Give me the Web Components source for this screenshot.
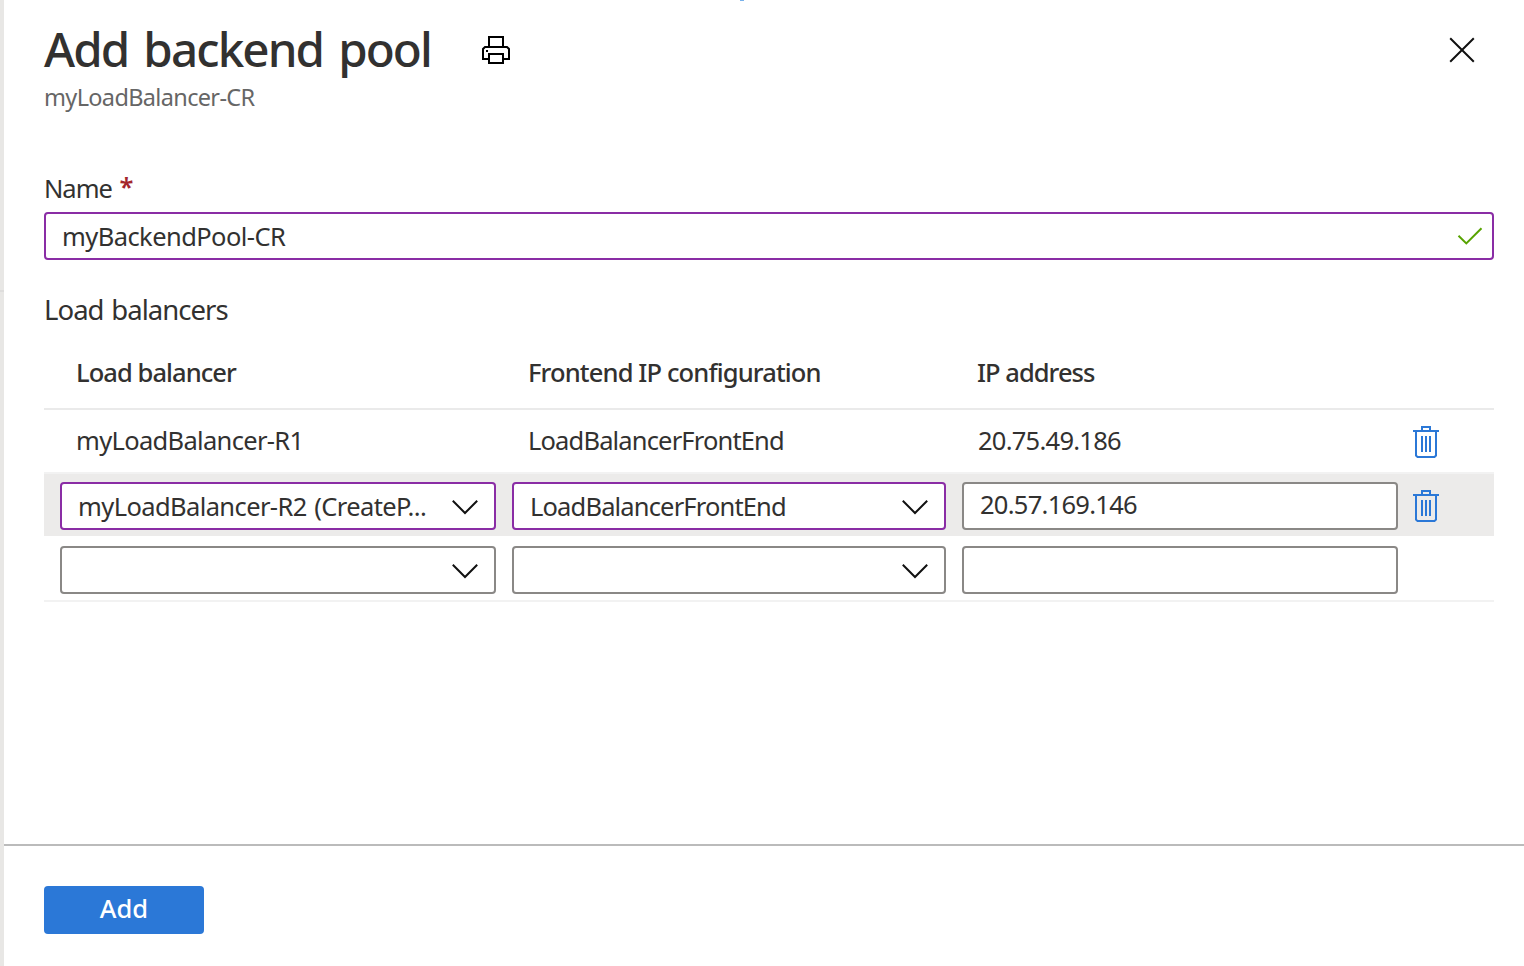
<!DOCTYPE html>
<html lang="en">
<head>
<meta charset="utf-8">
<title>Add backend pool</title>
<style>
html,body{margin:0;height:100%;background:#fff;overflow:hidden}
body{font-family:"Noto Sans","Open Sans",sans-serif;color:#323130}
</style>
</head>
<body>
<blade-page></blade-page>
<script>
const define = (name, html, setup) => {
  const template = document.createElement('template');
  template.innerHTML = html;
  customElements.define(name, class extends HTMLElement {
    connectedCallback() {
      if (this.shadowRoot) return;
      this.attachShadow({mode: 'open'}).append(template.content.cloneNode(true));
      if (setup) setup(this, this.shadowRoot);
    }
  });
};

/* A single line of text tracked so that its glyphs span the "span" attribute, in pixels;
   "gap" is extra width given to each space. */
define('tracked-text', `<style>
:host{display:block;white-space:nowrap;font-variant-ligatures:none;flex:none}
</style><slot></slot>`, host => {
  const text = host.textContent;
  const gap = +(host.getAttribute('gap') || 0);
  const cs = getComputedStyle(host);
  const ctx = document.createElement('canvas').getContext('2d');
  ctx.font = `${cs.fontWeight} ${cs.fontSize} ${cs.fontFamily}`;
  const m = ctx.measureText(text);
  const ink = m.actualBoundingBoxLeft + m.actualBoundingBoxRight + gap * (text.split(' ').length - 1);
  host.style.letterSpacing = ((+host.getAttribute('span') - ink) / (text.length - 1)).toFixed(3) + 'px';
  host.style.wordSpacing = gap + 'px';
  host.style.marginLeft = m.actualBoundingBoxLeft.toFixed(2) + 'px';
});

const icons = {
  print: [28, 28, '<path d="M7 11V1h14v10M7 23H1V13l2-2h22l2 2v10h-6M7 18h14v9H7z"/><rect x="4" y="14" width="2" height="2" fill="currentColor" stroke="none"/>'],
  close: [26, 26, '<path d="M1.2 1.2l23.6 23.6M24.8 1.2L1.2 24.8"/>'],
  check: [26, 18, '<path d="M1.5 8.8l7.8 7.6L24.5 1.2"/>'],
  chevron: [26, 14, '<path d="M.8.8L13 13 25.2.8"/>'],
  trash: [26, 32, '<path d="M0 5h26M9 5V1h8v4M3 5v24.5L4.5 31h17l1.5-1.5V5M9 10v16M13 10v16M17 10v16"/>']
};
customElements.define('line-icon', class extends HTMLElement {
  connectedCallback() {
    if (this.shadowRoot) return;
    const [w, h, body] = icons[this.getAttribute('name')];
    this.attachShadow({mode: 'open'}).innerHTML = `<style>:host{display:block;flex:none}svg{display:block;overflow:visible}</style>
<svg width="${w}" height="${h}" viewBox="0 0 ${w} ${h}" fill="none" stroke="currentColor" stroke-width="2">${body}</svg>`;
  }
});

define('form-field', `<style>
:host{display:flex;box-sizing:border-box;height:48px;border:2px solid #8a8886;border-radius:4px;background:#fff;
align-items:center;justify-content:space-between;padding:0 16px 0 18px;line-height:44px}
:host([edited]){border-color:#8a2da5}
:host([plain]){padding:0 16px 4px 17px}
::slotted(line-icon){color:#111;margin:2px 0 0 auto}
::slotted(line-icon[name=check]){color:#57a300;margin:-1px -7px 0 auto}
</style><slot></slot>`);

define('blade-header', `<style>
:host{display:grid;grid-template-columns:438px 1fr auto;padding:17px 49px 0 40px;height:150px;box-sizing:border-box}
.title{font-size:47.5px;line-height:64px;font-weight:500}
.sub{font-size:23.5px;line-height:32px;color:#666;padding-left:2px}
.print{color:#000;margin-top:19px}.close{color:#111;margin-top:20px}
</style>
<div><tracked-text class="title" span="385" gap="4.5">Add backend pool</tracked-text>
<tracked-text class="sub" span="209.5">myLoadBalancer-CR</tracked-text></div>
<line-icon class="print" name="print"></line-icon><line-icon class="close" name="close"></line-icon>`);

define('name-section', `<style>
:host{display:block;margin:21px 30px 0 40px;font-size:25.5px}
.label{display:flex;gap:7.5px;line-height:34px;padding-left:2px;height:41px}
.star{color:#a4262c;font-weight:600;line-height:31px}
</style>
<div class="label"><tracked-text span="66.5">Name</tracked-text><span class="star">*</span></div>
<form-field edited><tracked-text span="222">myBackendPool-CR</tracked-text><line-icon name="check"></line-icon></form-field>`);

define('balancer-row', `<style>
:host{display:grid;grid-template-columns:436px 434px 436px 26px;column-gap:16px;box-sizing:border-box;
height:64px;padding:0 16px;border-bottom:2px solid #f2f2f2;align-items:center;line-height:34px}
:host([head]){height:74px;border-color:#eaeaea;font-weight:500}
:host([active]){background:#ecebea;height:62px;border:0;padding-top:2px}
:host([last]){height:66px;padding-top:4px}
</style><slot></slot>`);

define('balancer-table', `<style>
:host{display:block;margin:0 30px 0 40px;font-size:25.5px}
h2{margin:0 0 0 2px;padding:0;font-size:27.5px;font-weight:400;line-height:38px;height:45px}
balancer-row>tracked-text{padding-left:18px}
.values{padding-bottom:2px}
balancer-row>.ip{padding-left:17px}
balancer-row>.ip-head{padding-left:15px}
line-icon[name=trash]{color:#2b78d7;margin-left:-1px}
.r1{margin-top:2px}
</style>
<h2><tracked-text span="181.5" gap="1.5">Load balancers</tracked-text></h2>
<balancer-row head><tracked-text span="159">Load balancer</tracked-text><tracked-text span="289.5">Frontend IP configuration</tracked-text><tracked-text class="ip-head" span="118">IP address</tracked-text></balancer-row>
<balancer-row><tracked-text class="values" span="221.5">myLoadBalancer-R1</tracked-text><tracked-text class="values" span="253">LoadBalancerFrontEnd</tracked-text><tracked-text class="values ip" span="142">20.75.49.186</tracked-text><line-icon class="r1" name="trash"></line-icon></balancer-row>
<balancer-row active><form-field edited><tracked-text span="345" gap="1.5">myLoadBalancer-R2 (CreateP...</tracked-text><line-icon name="chevron"></line-icon></form-field><form-field edited><tracked-text span="253">LoadBalancerFrontEnd</tracked-text><line-icon name="chevron"></line-icon></form-field><form-field plain><tracked-text span="156">20.57.169.146</tracked-text></form-field><line-icon name="trash"></line-icon></balancer-row>
<balancer-row last><form-field><line-icon name="chevron"></line-icon></form-field><form-field><line-icon name="chevron"></line-icon></form-field><form-field plain></form-field></balancer-row>`);

define('action-button', `<style>
:host{display:flex;justify-content:center;width:160px;height:48px;border-radius:4px;background:#2b78d7;color:#fff;
font-size:25.5px;font-weight:500;line-height:44px}
</style><slot></slot>`);

define('blade-page', `<style>
:host{display:flex;height:966px;width:1524px}
.edge{width:4px;background:#e8e7e5;flex:none;box-sizing:border-box;padding-top:290px}
.edge i{display:block;height:2px;background:#dedddc}
main{flex:1;display:flex;flex-direction:column;background:#fff;position:relative}
.dot{position:absolute;left:736px;top:0;width:4px;height:1px;background:#78b1ea}
balancer-table{margin-top:31px}
footer{margin-top:auto;height:122px;box-sizing:border-box;border-top:2px solid #bbb;padding:40px}
</style>
<div class="edge"><i></i></div>
<main><div class="dot"></div>
<blade-header></blade-header>
<name-section></name-section>
<balancer-table></balancer-table>
<footer><action-button><tracked-text span="46.5">Add</tracked-text></action-button></footer>
</main>`);
</script>
</body>
</html>
